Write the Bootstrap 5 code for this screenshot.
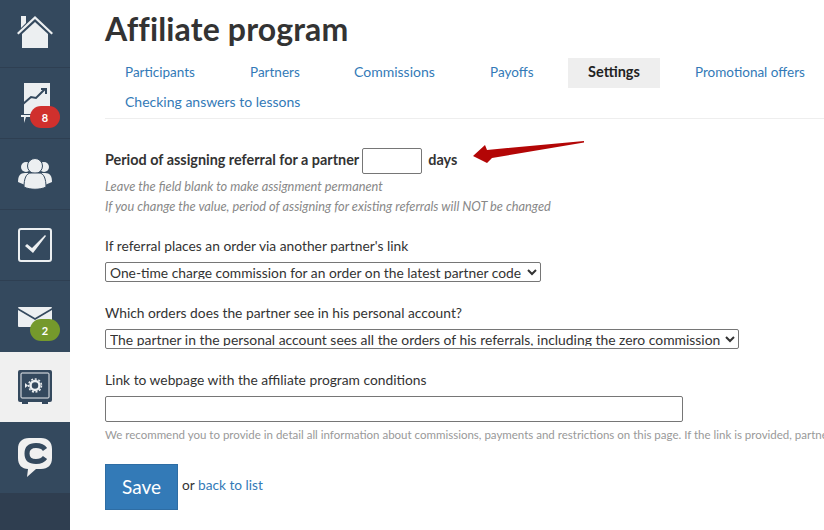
<!DOCTYPE html>
<html lang="en"><head><meta charset="utf-8"><title>Affiliate program</title>
<link href="https://cdn.jsdelivr.net/npm/bootstrap@5.3.0/dist/css/bootstrap.min.css" rel="stylesheet">
<style>
html,body{height:530px;overflow:hidden;background:#fff}
body{font-family:Lato,"Liberation Sans",sans-serif;color:#333;font-size:13.8px}
.shell{height:530px;width:824px;overflow:hidden}
.side{width:70px;flex:none;background:#2f3e50;height:530px}
.side-item{height:71px;background:#34495e;border-bottom:1px solid #2e3f52;position:relative;display:flex;align-items:center;justify-content:center}
.side-item.first{height:68px;padding-bottom:3px}
.side-item.on{background:#f0f0f0;border-bottom:0;height:70px}
.side-item.plain{border-bottom:0;height:71px}
.bdg{position:absolute;left:30px;top:38px;width:30px;height:22px;border-radius:11px;color:#fff;font-size:11px;font-weight:700;display:flex;align-items:center;justify-content:center;line-height:1}
.bdg-r{background:#d0302d}.bdg-g{background:#75992c}
.main{padding-left:35px;flex:none;width:754px}
.ttl{font-size:32px;font-weight:700;color:#333;margin:0;line-height:36px;padding-top:11px;letter-spacing:.15px;white-space:nowrap}
.tabs{width:719px;margin-top:11px;border-bottom:1px solid #eee;height:61px;flex-wrap:wrap;display:flex;align-content:flex-start}
.tabs a{display:block;height:30px;line-height:28px;font-size:13.5px;color:#337ab7;text-decoration:none;padding:0 0 0 20px;white-space:nowrap}
.tabs a.act{background:#eee;color:#222;font-weight:700;font-size:14.5px;padding:0;width:92px;text-align:center;line-height:28px}
.t1{width:125px}.t2{width:104px}.t3{width:136px}.t4{width:98px}
.tabs a.t3,.tabs a.t6{font-size:14px}
.tabs a.t5{margin-left:35px;padding-left:0}
.t6{width:100%}
.period{margin-top:29px;height:26px;font-weight:700;font-size:14.4px;color:#333;white-space:nowrap;position:relative;display:flex;align-items:center}
.period span{padding-bottom:2px}
.period input{width:60px;height:26px;border:1px solid #767676;border-radius:2px;margin:0 6px 0 3px;background:#fff}
.hint{font-size:12.8px;font-style:italic;color:#888;line-height:20px;white-space:nowrap}
.hint0{margin-top:2px}
.lbl{line-height:20px;color:#333;white-space:nowrap;margin-top:21px}
.lbl0{margin-top:20px}
.sel{display:block;height:20px;font:13.8px/16px Lato,"Liberation Sans",sans-serif;color:#333;border:1px solid #767676;border-radius:2px;background:#fff;padding:0 0 2px;white-space:nowrap;margin-top:6px}
.s1{width:436px}.s2{width:634px;font-size:13.9px}
.url{display:block;width:578px;height:26px;border:1px solid #767676;border-radius:2px;background:#fff;margin-top:6px}
.note{font-size:11.5px;color:#999;white-space:nowrap;line-height:16px;margin-top:5px}
.foot{margin-top:21px}
.btn-save{width:73px;height:46px;background:#337ab7;border:1px solid #2e6da4;border-radius:0;color:#fff;font-size:19px;padding:0}
.btn-save:hover{background:#337ab7;color:#fff}
.back{padding-bottom:4px;font-size:13.7px}
.back a{color:#337ab7;text-decoration:none}
.arrow{position:absolute;left:368px;top:-11px}
</style></head><body>
<div class="shell d-flex">
<nav class="side">
<div class="side-item first"><svg width="38" height="36" viewBox="0 0 38 36"><path d="M5 2h5v7L5 14z" fill="#eceff1"/><path d="M1 19 19 2l18 17-1.500 1.500L19 5 2.500 20.500z" fill="#eceff1"/><path d="M6 20 19 8l13 12v14H6z" fill="#eceff1"/></svg></div>
<div class="side-item"><svg width="30" height="42" viewBox="0 0 30 42"><path d="M4 1h26v31H4z" fill="#eceff1"/><path d="M3 22l8-7 5 1 9-9M21 7h5v5" fill="none" stroke="#34495e" stroke-width="2"/><path d="M1 33h14v2H1zM4 35h2l-2 6z" fill="#eceff1"/></svg><span class="bdg bdg-r">8</span></div>
<div class="side-item"><svg width="36" height="32" viewBox="0 0 36 32"><circle cx="9" cy="9" r="5" fill="#eceff1"/><circle cx="27" cy="9" r="5" fill="#eceff1"/><path d="M1 24c0-6 2-9 7-9h20c5 0 7 3 7 9l-7 3H8z" fill="#eceff1"/><circle cx="18" cy="8" r="7.500" fill="#eceff1" stroke="#34495e"/><path d="M7 29c0-8 2-14 7-14h8c5 0 7 6 7 14-6 3-16 3-22 0z" fill="#eceff1" stroke="#34495e"/></svg></div>
<div class="side-item"><svg width="34" height="34" viewBox="0 0 34 34"><rect x="1" y="1" width="32" height="32" rx="2" fill="none" stroke="#eceff1" stroke-width="2"/><path d="M7 18l2-2 5 4L27 7l1 1-13 17z" fill="#eceff1"/></svg></div>
<div class="side-item plain"><svg width="34" height="20" viewBox="0 0 34 20"><path d="M0 1 17 11 34 1V1a1 1 0 0 0-1-1H1a1 1 0 0 0-1 1z" fill="#eceff1"/><path d="M0 3v16a1 1 0 0 0 1 1h32a1 1 0 0 0 1-1V3L17 13z" fill="#eceff1"/></svg><span class="bdg bdg-g">2</span></div>
<div class="side-item on"><svg width="34" height="34" viewBox="0 0 34 34"><rect width="34" height="32" rx="2" fill="#34495e"/><rect x="3" y="3" width="28" height="25" rx="1" fill="none" stroke="#eceff1"/><path d="M4 31h6v3H4zM24 31h6v3h-6z" fill="#34495e"/><circle cx="17" cy="15.500" r="4.500" fill="none" stroke="#eceff1" stroke-width="2.500"/><circle cx="17" cy="15.500" r="6.500" fill="none" stroke="#eceff1" stroke-width="1.500" stroke-dasharray="2 1.700"/><path d="M7 13l3 2.500-3 2.500z" fill="#eceff1"/></svg></div>
<div class="side-item plain"><svg width="34" height="39" viewBox="0 0 34 39"><path d="M11 0h12c7 0 11 4 11 11v9c0 7-4 11-11 11h-5l-9 8 1-8c-6 0-10-4-10-11v-9C0 4 4 0 11 0z" fill="#f0f0f0"/><path d="M27 11.500c-2-3-4-4-9-4-6 0-9 3-9 8s3 8 9 8c5 0 7-1 9-4" fill="none" stroke="#34495e" stroke-width="5"/></svg></div>
</nav>
<main class="main">
<h1 class="ttl">Affiliate program</h1>
<div class="tabs">
<a class="t1" href="#">Participants</a><a class="t2" href="#">Partners</a><a class="t3" href="#">Commissions</a><a class="t4" href="#">Payoffs</a><a class="act" href="#">Settings</a><a href="#" class="t5">Promotional offers</a><a href="#" class="t6">Checking answers to lessons</a>
</div>
<div class="period"><span>Period of assigning referral for a partner</span><input type="text" aria-label="days"><span>days</span>
<svg class="arrow" width="116" height="30" viewBox="0 0 116 30"><path d="M0 19 12 8l2 5 97-9 0 1.500L19 21l-5 5z" fill="#b30606"/></svg></div>
<div class="hint hint0">Leave the field blank to make assignment permanent</div>
<div class="hint">If you change the value, period of assigning for existing referrals will NOT be changed</div>
<div class="lbl lbl0">If referral places an order via another partner's link</div>
<select class="sel s1"><option>One-time charge commission for an order on the latest partner code</option></select>
<div class="lbl">Which orders does the partner see in his personal account?</div>
<select class="sel s2"><option>The partner in the personal account sees all the orders of his referrals, including the zero commission</option></select>
<div class="lbl">Link to webpage with the affiliate program conditions</div>
<input class="url" type="text" aria-label="Link">
<div class="note">We recommend you to provide in detail all information about commissions, payments and restrictions on this page. If the link is provided, partners will see it in their personal account</div>
<div class="d-flex align-items-center gap-1 foot"><button class="btn btn-save" type="button">Save</button><span class="back">or <a href="#">back to list</a></span></div>
</main>
</div>
</body></html>
